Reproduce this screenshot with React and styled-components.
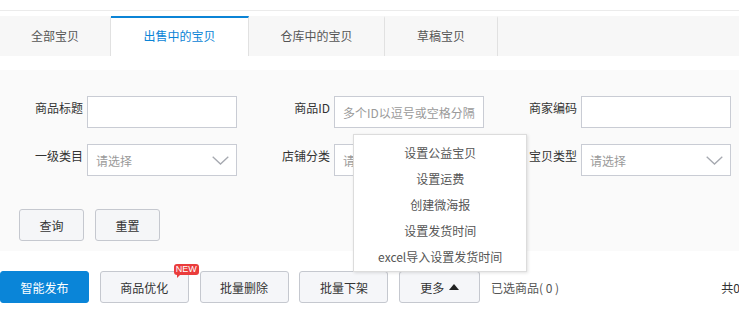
import React from "react";
import styled, { createGlobalStyle } from "styled-components";

const GlobalStyle = createGlobalStyle`
  html, body {
    margin: 0;
    padding: 0;
    background: #fff;
    overflow: hidden;
  }
  body {
    font-family: "Noto Sans CJK SC", "Liberation Sans", sans-serif;
    font-size: 12px;
    color: #333;
  }
  * {
    box-sizing: border-box;
  }
`;

const tabs = [
  { text: "全部宝贝", width: 111 },
  { text: "出售中的宝贝", width: 138 },
  { text: "仓库中的宝贝", width: 136 },
  { text: "草稿宝贝", width: 113 },
];

const fields = [
  [
    { label: "商品标题", type: "input" },
    { label: "商品ID", type: "input", placeholder: "多个ID以逗号或空格分隔" },
    { label: "商家编码", type: "input" },
  ],
  [
    { label: "一级类目", type: "select" },
    { label: "店铺分类", type: "select" },
    { label: "宝贝类型", type: "select" },
  ],
];

const moreItems = [
  "设置公益宝贝",
  "设置运费",
  "创建微海报",
  "设置发货时间",
  "excel导入设置发货时间",
];

function Chevron() {
  return (
    <svg width="17" height="9" viewBox="0 0 17 9">
      <polyline
        points="0.7,0.7 8.5,8 16.3,0.7"
        fill="none"
        stroke="#a6a9b0"
        strokeWidth="1.3"
      />
    </svg>
  );
}

export default function App() {
  const active = 1;
  return (
    <>
      <GlobalStyle />
      <Page>
        <TopLine />
        <TabBar>
          {tabs.map((t, i) => (
            <Tab key={t.text} $width={t.width} $active={i === active}>
              {t.text}
            </Tab>
          ))}
        </TabBar>

        <FilterPanel>
          {fields.map((row, r) => (
            <FieldRow key={r}>
              {row.map((f) => (
                <Field key={f.label}>
                  <Label>{f.label}</Label>
                  {f.type === "input" ? (
                    <TextInput placeholder={f.placeholder || ""} />
                  ) : (
                    <SelectBox>
                      <span>请选择</span>
                      <Chevron />
                    </SelectBox>
                  )}
                </Field>
              ))}
            </FieldRow>
          ))}
          <PanelButtons>
            <PanelButton>查询</PanelButton>
            <PanelButton>重置</PanelButton>
          </PanelButtons>
        </FilterPanel>

        <Toolbar>
          <ActionButton $primary>智能发布</ActionButton>
          <ActionButton>
            商品优化
            <NewBadge>NEW</NewBadge>
          </ActionButton>
          <ActionButton>批量删除</ActionButton>
          <ActionButton>批量下架</ActionButton>
          <ActionButton $width={81}>
            更多
            <UpArrow />
            <Menu>
              {moreItems.map((m) => (
                <MenuItem key={m}>{m}</MenuItem>
              ))}
            </Menu>
          </ActionButton>
          <Selected>已选商品( 0 )</Selected>
          <Total>共0条</Total>
        </Toolbar>
      </Page>
    </>
  );
}

const Page = styled.div`
  width: 752px;
  height: 310px;
`;

const TopLine = styled.div`
  height: 11px;
  border-bottom: 1px solid #ebebeb;
  margin-bottom: 5px;
`;

const TabBar = styled.div`
  display: flex;
  height: 40px;
  background: #f7f7f7;
`;

const Tab = styled.div`
  width: ${({ $width }) => $width}px;
  display: flex;
  align-items: center;
  justify-content: center;
  border-right: 1px solid #e1e1e1;
  border-top: 2px solid ${({ $active }) => ($active ? "#0b84d6" : "transparent")};
  background: ${({ $active }) => ($active ? "#fff" : "transparent")};
  color: ${({ $active }) => ($active ? "#0b84d6" : "#555")};
  font-size: 12px;
  padding-bottom: 3px;
`;

const FilterPanel = styled.div`
  margin-top: 14px;
  background: #fafafa;
  padding: 26px 0 10px 0;
  height: 181px;
`;

const FieldRow = styled.div`
  display: flex;
  margin-bottom: 16px;
`;

const Field = styled.div`
  display: flex;
  align-items: flex-start;
  width: 247px;
`;

const Label = styled.div`
  width: 83px;
  margin-right: 4px;
  text-align: right;
  line-height: 24px;
  color: #333;
`;

const TextInput = styled.input`
  width: 150px;
  height: 32px;
  border: 1px solid #c9ccd4;
  background: #fff;
  padding: 0 8px;
  font-family: inherit;
  font-size: 12px;
  color: #333;
  outline: none;

  &::placeholder {
    color: #9a9a9a;
  }
`;

const SelectBox = styled.div`
  width: 150px;
  height: 32px;
  border: 1px solid #c9ccd4;
  background: #fff;
  padding: 0 7px 0 8px;
  display: flex;
  align-items: center;
  justify-content: space-between;
  color: #9a9a9a;

  svg {
    margin-top: 1px;
  }
`;

const PanelButtons = styled.div`
  display: flex;
  gap: 11px;
  padding-left: 19px;
  margin-top: 33px;
`;

const PanelButton = styled.button`
  width: 65px;
  height: 32px;
  border: 1px solid #c5c8cf;
  border-radius: 3px;
  background: #f5f6f8;
  font-family: inherit;
  font-size: 12px;
  color: #333;
  padding: 0;
`;

const Toolbar = styled.div`
  display: flex;
  align-items: center;
  gap: 10.8px;
  margin-top: 20px;
`;

const ActionButton = styled.div`
  position: relative;
  width: ${({ $width }) => $width || 89}px;
  height: 32px;
  display: flex;
  align-items: center;
  justify-content: center;
  gap: 5px;
  border-radius: 3px;
  border: 1px solid ${({ $primary }) => ($primary ? "#0a85d8" : "#c5c8cf")};
  background: ${({ $primary }) => ($primary ? "#0a85d8" : "#f5f6f9")};
  color: ${({ $primary }) => ($primary ? "#fff" : "#333")};
  font-size: 12px;
`;

const NewBadge = styled.span`
  position: absolute;
  top: -8px;
  right: -11px;
  height: 11px;
  padding: 0 2px;
  border-radius: 3px;
  background: #ea3c3c;
  color: #fff;
  font-family: "Liberation Sans", sans-serif;
  font-size: 9px;
  line-height: 11px;

  &::after {
    content: "";
    position: absolute;
    left: 3px;
    bottom: -3px;
    border-left: 3px solid #ea3c3c;
    border-bottom: 3px solid transparent;
  }
`;

const UpArrow = styled.span`
  width: 0;
  height: 0;
  border-left: 5.5px solid transparent;
  border-right: 5.5px solid transparent;
  border-bottom: 6px solid #222;
  margin-top: -1px;
`;

const Menu = styled.div`
  position: absolute;
  left: -47px;
  bottom: 100%;
  width: 174px;
  height: 138px;
  padding-top: 5px;
  background: #fff;
  border: 1px solid #dcdcdc;
  box-shadow: 1px 1px 3px rgba(0, 0, 0, 0.12);
  z-index: 5;
`;

const MenuItem = styled.div`
  height: 26px;
  line-height: 26px;
  text-align: center;
  color: #555;
  white-space: nowrap;
`;

const Selected = styled.span`
  color: #555;
`;

const Total = styled.span`
  margin-left: auto;
  color: #333;
  white-space: nowrap;
`;
